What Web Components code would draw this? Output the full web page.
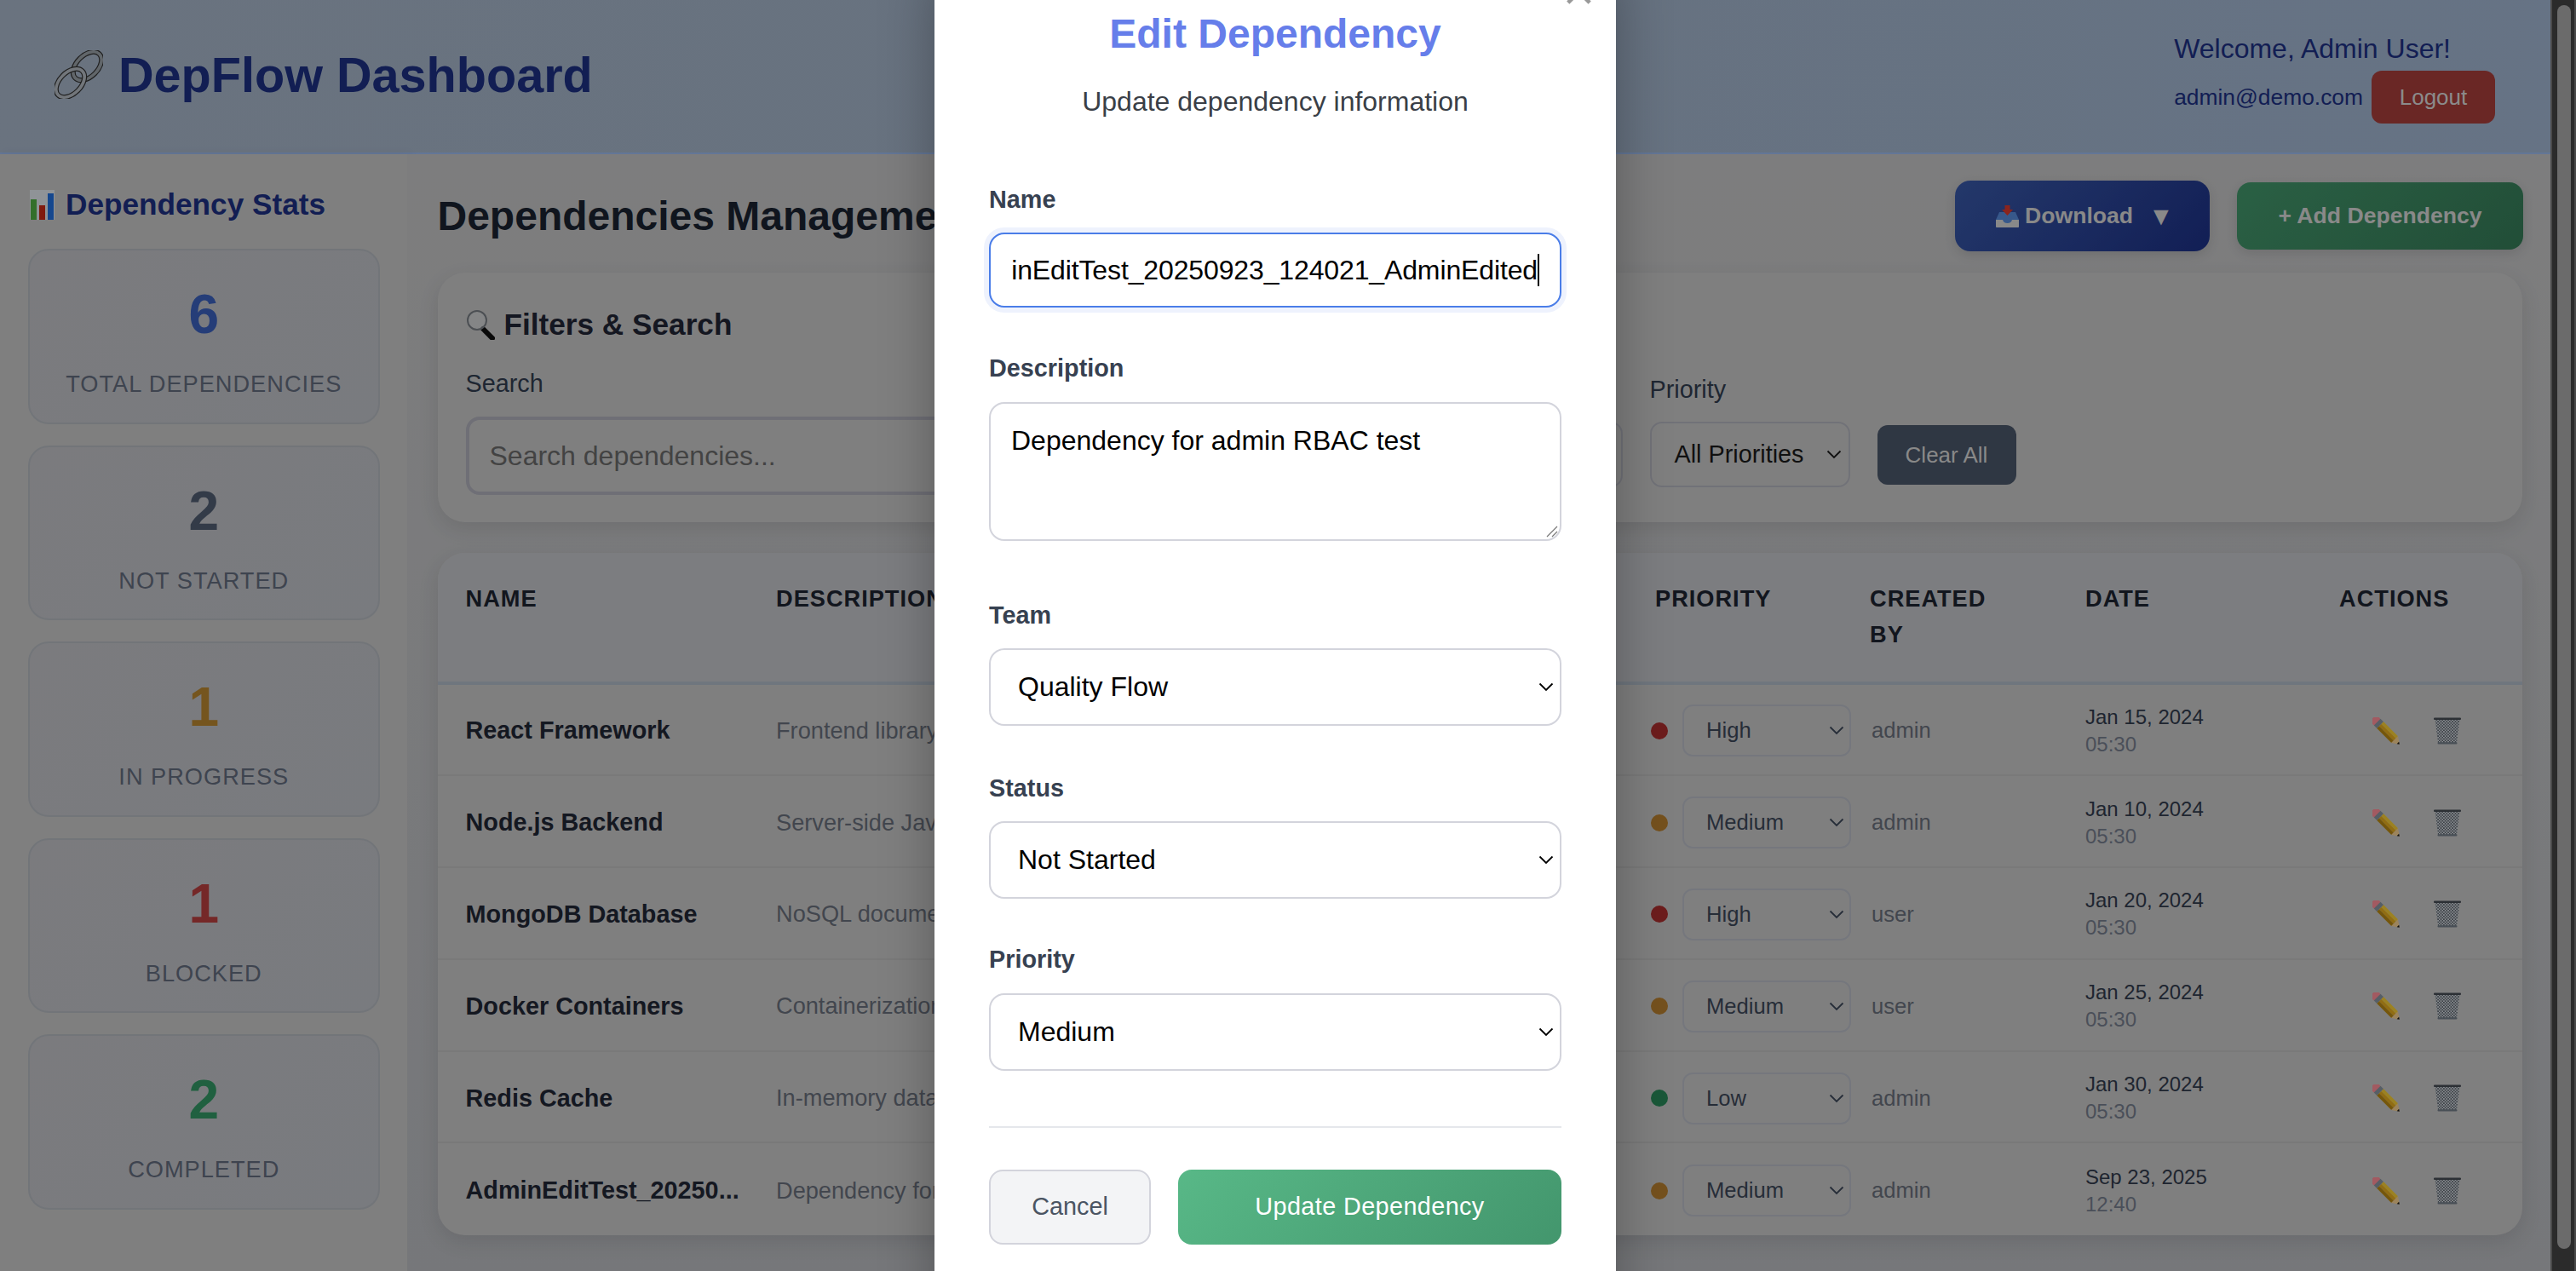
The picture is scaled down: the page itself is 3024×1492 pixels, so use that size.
<!DOCTYPE html>
<html lang="en">
<head>
<meta charset="utf-8">
<title>DepFlow Dashboard</title>
<style>
    html, body { margin: 0; height: 100%; overflow: hidden; }
    body { font-family: "Liberation Sans", Arial, sans-serif; }
</style>
</head>
<body>
<dep-app></dep-app>

<script>
const ICONS = {
    link: `<svg viewBox="0 0 57 57"><g fill="none">
        <ellipse cx="38.5" cy="18.5" rx="20" ry="12.5" transform="rotate(-45 38.5 18.5)" stroke="#2e2e2e" stroke-width="6"/>
        <ellipse cx="38.5" cy="18.5" rx="20" ry="12.5" transform="rotate(-45 38.5 18.5)" stroke="#8c9298" stroke-width="3.6"/>
        <ellipse cx="18.5" cy="38.5" rx="20" ry="12.5" transform="rotate(-45 18.5 38.5)" stroke="#2e2e2e" stroke-width="6"/>
        <ellipse cx="18.5" cy="38.5" rx="20" ry="12.5" transform="rotate(-45 18.5 38.5)" stroke="#a4aab0" stroke-width="3.6"/>
    </g></svg>`,
    chart: `<svg viewBox="0 0 29 35">
        <rect width="29" height="35" fill="#cdd3d8"/>
        <rect x="1" y="11" width="7" height="24" fill="#4a9f3e"/>
        <rect x="11" y="18" width="7" height="17" fill="#b82616"/>
        <rect x="21" y="4" width="7" height="31" fill="#1f66cc"/>
    </svg>`,
    search: `<svg viewBox="0 0 34 36">
        <path d="M20 23 L31 34" stroke="#0d0d0d" stroke-width="6" stroke-linecap="round"/>
        <circle cx="13" cy="13" r="11" fill="#c4c8cc" fill-opacity=".5" stroke="#6d7278" stroke-width="2"/>
    </svg>`,
    tray: `<svg viewBox="0 0 27 26">
        <path d="M4 8 H23 L27 17 V25 Q27 26 26 26 H1 Q0 26 0 25 V17 Z" fill="#4f7fc8"/>
        <path d="M0 17 H8 Q9 21 13.5 21 Q18 21 19 17 H27 V25 Q27 26 26 26 H1 Q0 26 0 25 Z" fill="#c4c4c4"/>
        <path d="M10.5 0 H16.5 V5 H20 L13.5 12 L7 5 H10.5 Z" fill="#c8342a"/>
    </svg>`,
    pencil: `<svg viewBox="0 0 32 32"><g transform="translate(3.5 3.5) rotate(45)">
        <rect x="-4" y="-5.5" width="9" height="11" rx="3.5" fill="#e8818c"/>
        <rect x="3" y="-5.5" width="5" height="11" fill="#7c8792"/>
        <rect x="8" y="-5.5" width="24" height="3.7" fill="#e0ba30"/>
        <rect x="8" y="-1.8" width="24" height="3.6" fill="#d09c1a"/>
        <rect x="8" y="1.8" width="24" height="3.7" fill="#a87c10"/>
        <path d="M32 -5.5 L40 0 L32 5.5 Z" fill="#e0bd84"/>
        <path d="M37.4 -1.8 L40 0 L37.4 1.8 Z" fill="#111"/>
    </g></svg>`,
    bin: `<svg viewBox="0 0 32 32">
        <defs><pattern id="mesh" width="3.4" height="3.4" patternUnits="userSpaceOnUse">
            <path d="M0 0 L3.4 3.4 M3.4 0 L0 3.4" stroke="#454c54" stroke-width=".75"/>
        </pattern></defs>
        <path d="M1.5 2 L5 30 H27 L30.5 2 Z" fill="#c2c8ce"/>
        <path d="M1.5 2 L5 30 H27 L30.5 2 Z" fill="url(#mesh)"/>
        <rect x="0" y="0.5" width="32" height="2.4" rx="1" fill="#3f454d"/>
        <rect x="4.5" y="29.2" width="23" height="2.2" rx="1" fill="#68717b"/>
    </svg>`,
};

class ShadowEl extends HTMLElement {
    execShadow(html) {
        const template = document.createElement('template');
        template.innerHTML = html;
        const shadowRoot = this.shadowRoot || this.attachShadow({ mode: 'open' });
        shadowRoot.innerHTML = '';
        shadowRoot.appendChild(template.content.cloneNode(true));
        this.shadow = shadowRoot;
    }
}

class EmojiIcon extends ShadowEl {
    connectedCallback() {
        const w = this.getAttribute('w');
        const h = this.getAttribute('h') || w;
        this.execShadow(`
<style>
    :host { display: inline-block; flex: none; line-height: 0; width: ${w}px; height: ${h}px; }
    svg { width: 100%; height: 100%; display: block; }
</style>
${ICONS[this.getAttribute('name')]}`);
    }
}

// drawn select: the native arrow differs per platform
class FakeSelect extends ShadowEl {
    constructor() {
        super();
        this.execShadow(`
<style>
    :host {
        display: flex;
        align-items: center;
        box-sizing: border-box;
        background: var(--select-bg, transparent);
        border: 2px solid var(--select-border, #a5a8b2);
        border-radius: var(--select-radius, 12px);
        padding-left: var(--select-pad, 27px);
        padding-right: var(--arrow-pad, 8px);
        color: var(--select-color, #181818);
        white-space: nowrap;
    }
    .text { flex: 1; }
    svg { flex: none; width: 18px; height: 11px; }
</style>
<span class="text"><slot></slot></span>
<svg viewBox="0 0 18 11"><path d="M1.5 1.5 L9 9 L16.5 1.5" fill="none" stroke="currentColor" stroke-width="1.8"/></svg>`);
    }
}

class AppHeader extends ShadowEl {
    static TEMPLATE = `
<style>
    :host {
        display: flex;
        align-items: center;
        justify-content: space-between;
        box-sizing: border-box;
        height: 181px;
        padding: 0 65px 0 64px;
        background: linear-gradient(100deg, #98a5b7 0%, #94a4b8 60%, #92a5bf 100%);
        border-bottom: 2px solid #8ea9d8;
    }
    h1 {
        display: flex;
        align-items: center;
        gap: 18px;
        margin: 0 0 4px;
        font-size: 57.6px;
        line-height: 68px;
        font-weight: 700;
        color: #1a2c78;
    }
    .user { margin-top: 5px; color: #1a2c78; }
    .welcome { font-size: 32px; line-height: 36px; margin-bottom: 8px; }
    .line { display: flex; align-items: center; gap: 10px; font-size: 26.4px; }
    button {
        width: 145px;
        height: 62px;
        border: 0;
        border-radius: 12px;
        background: #983835;
        color: #c8c8c8;
        font: inherit;
        font-size: 26px;
    }
</style>
<h1><emoji-icon name="link" w="57"></emoji-icon>DepFlow Dashboard</h1>
<div class="user">
    <div class="welcome">Welcome, Admin User!</div>
    <div class="line"><span>admin@demo.com</span><button>Logout</button></div>
</div>`;
    constructor() {
        super();
        this.execShadow(AppHeader.TEMPLATE);
    }
}

class StatCard extends ShadowEl {
    connectedCallback() {
        this.execShadow(`
<style>
    :host {
        display: block;
        box-sizing: border-box;
        height: 205.5px;
        padding-top: 39px;
        text-align: center;
        background: linear-gradient(135deg, #b0b1b5, #aeb0b6);
        border: 2px solid #a4a8ae;
        border-radius: 24px;
    }
    .num { font-size: 64px; line-height: 72px; font-weight: 700; color: ${this.getAttribute('color')}; }
    .label { margin-top: 29px; font-size: 27.2px; line-height: 34px; letter-spacing: 1px; color: #5a6272; }
</style>
<div class="num">${this.getAttribute('value')}</div>
<div class="label">${this.getAttribute('label')}</div>`);
    }
}

class StatSidebar extends ShadowEl {
    static TEMPLATE = `
<style>
    :host {
        display: flex;
        flex-direction: column;
        gap: 25px;
        flex: none;
        box-sizing: border-box;
        width: 478px;
        padding: 39px 32.5px 0 33px;
        background: #b7b7b7;
        box-shadow: 4px 0 12px rgba(0, 0, 0, .05);
    }
    h2 {
        display: flex;
        align-items: center;
        gap: 13px;
        margin: 0 0 7px;
        font-size: 35.2px;
        line-height: 40px;
        color: #1a2c78;
        padding-left: 2px;
    }
</style>
<h2><emoji-icon name="chart" w="29" h="35"></emoji-icon>Dependency Stats</h2>
<stat-card value="6" label="TOTAL DEPENDENCIES" color="#3558ac"></stat-card>
<stat-card value="2" label="NOT STARTED" color="#4a5568"></stat-card>
<stat-card value="1" label="IN PROGRESS" color="#a87a2c"></stat-card>
<stat-card value="1" label="BLOCKED" color="#a83a3a"></stat-card>
<stat-card value="2" label="COMPLETED" color="#2f8a5c"></stat-card>`;
    constructor() {
        super();
        this.execShadow(StatSidebar.TEMPLATE);
    }
}

class FilterPanel extends ShadowEl {
    static TEMPLATE = `
<style>
    :host {
        display: block;
        box-sizing: border-box;
        height: 293px;
        padding: 40px 33px 32px;
        background: #b7b7b7;
        border-radius: 32px;
        box-shadow: 0 8px 24px rgba(0, 0, 0, .1);
    }
    h3 {
        display: flex;
        align-items: center;
        gap: 11px;
        margin: 0 0 29px;
        font-size: 35.2px;
        line-height: 42px;
        color: #1d2230;
    }
    .row { display: flex; align-items: center; gap: 32px; height: 150px; }
    label { display: block; font-size: 28.8px; line-height: 34px; color: #2d3748; }
    .search { width: 1112px; }
    .search label { margin: 2px 0 22px; }
    .box {
        box-sizing: border-box;
        height: 92px;
        padding-left: 24px;
        display: flex;
        align-items: center;
        font-size: 32px;
        color: #606060;
        border: 4px solid #9fa0aa;
        border-radius: 16px;
    }
    .pick label { margin-bottom: 21px; }
    fake-select { height: 77px; font-size: 28.8px; --select-border: #a3a4ad; --select-radius: 14px; }
    .status { width: 214px; }
    .priority { width: 235px; }
    button {
        width: 163px;
        height: 70px;
        margin-top: 56px;
        border: 0;
        border-radius: 12px;
        background: #444f60;
        color: #c4c4c4;
        font: inherit;
        font-size: 26px;
    }
</style>
<h3><emoji-icon name="search" w="34" h="36"></emoji-icon>Filters &amp; Search</h3>
<div class="row">
    <div class="search">
        <label>Search</label>
        <div class="box">Search dependencies...</div>
    </div>
    <div class="pick status"><label>&nbsp;</label><fake-select></fake-select></div>
    <div class="pick priority"><label>Priority</label><fake-select>All Priorities</fake-select></div>
    <button>Clear All</button>
</div>`;
    constructor() {
        super();
        this.execShadow(FilterPanel.TEMPLATE);
    }
}

class DepRow extends ShadowEl {
    connectedCallback() {
        const get = k => this.getAttribute(k);
        this.execShadow(`
<style>
    :host {
        display: grid;
        grid-template-columns: var(--cols);
        align-items: center;
        box-sizing: border-box;
        height: 107.8px;
        padding: 3px 0 0 33px;
        border-bottom: 2px solid #aeaeae;
    }
    :host(:last-child) { border-bottom: 0; }
    .name { font-size: 28.8px; font-weight: 700; color: #1d2330; white-space: nowrap; }
    .desc { font-size: 27.2px; color: #5f6570; white-space: nowrap; }
    .prio { display: flex; align-items: center; gap: 17px; }
    .dot { width: 20px; height: 20px; border-radius: 50%; background: ${get('dot')}; }
    fake-select {
        width: 198px;
        height: 61px;
        font-size: 25.6px;
        --select-color: #374151;
        --select-pad: 26px;
        --arrow-pad: 6px;
        --select-border: #a8abb4;
    }
    .by { font-size: 25.6px; color: #5f6570; padding-left: 2px; }
    .date { font-size: 24px; line-height: 32px; color: #2d3545; }
    .time { color: #6b7280; }
    .actions { display: flex; align-items: center; gap: 40px; padding-left: 39px; }
</style>
<div class="name">${get('name')}</div>
<div class="desc">${get('desc')}</div>
<div class="prio"><span class="dot"></span><fake-select>${get('prio')}</fake-select></div>
<div class="by">${get('by')}</div>
<div class="date"><div>${get('date')}</div><div class="time">${get('time')}</div></div>
<div class="actions"><emoji-icon name="pencil" w="32"></emoji-icon><emoji-icon name="bin" w="32"></emoji-icon></div>`);
    }
}

class DepTable extends ShadowEl {
    static TEMPLATE = `
<style>
    :host {
        display: block;
        --cols: 364.5px 1027px 257px 253px 298px 1fr;
        background: #b7b7b7;
        border-radius: 32px;
        overflow: hidden;
        box-shadow: 0 8px 24px rgba(0, 0, 0, .1);
    }
    .head {
        display: grid;
        grid-template-columns: var(--cols);
        box-sizing: border-box;
        height: 155px;
        padding: 33.5px 0 0 33px;
        background: #b2b4b8;
        border-bottom: 4px solid #a0a9b5;
        font-size: 27.2px;
        line-height: 42px;
        font-weight: 700;
        letter-spacing: 1px;
        color: #1a202c;
    }
    .pad { padding-left: 5px; }
    .wrap { width: 150px; }
</style>
<div class="head">
    <div>NAME</div>
    <div>DESCRIPTION</div>
    <div class="pad">PRIORITY</div>
    <div class="wrap">CREATED BY</div>
    <div>DATE</div>
    <div>ACTIONS</div>
</div>
<div id="rows"></div>`;
    constructor() {
        super();
        this.execShadow(DepTable.TEMPLATE);

        const high = '#9c2a2a';
        const medium = '#a8752c';
        const low = '#267f52';
        const list = [
            ['React Framework', 'Frontend library for user interfaces', high, 'High', 'admin', 'Jan 15, 2024', '05:30'],
            ['Node.js Backend', 'Server-side JavaScript runtime', medium, 'Medium', 'admin', 'Jan 10, 2024', '05:30'],
            ['MongoDB Database', 'NoSQL document database', high, 'High', 'user', 'Jan 20, 2024', '05:30'],
            ['Docker Containers', 'Containerization platform', medium, 'Medium', 'user', 'Jan 25, 2024', '05:30'],
            ['Redis Cache', 'In-memory data store', low, 'Low', 'admin', 'Jan 30, 2024', '05:30'],
            ['AdminEditTest_20250...', 'Dependency for admin RBAC test', medium, 'Medium', 'admin', 'Sep 23, 2025', '12:40'],
        ];

        const parent = this.shadow.getElementById('rows');
        list.forEach(item => {
            const row = document.createElement('dep-row');
            ['name', 'desc', 'dot', 'prio', 'by', 'date', 'time'].forEach((k, i) => row.setAttribute(k, item[i]));
            parent.appendChild(row);
        });
    }
}

class MainArea extends ShadowEl {
    static TEMPLATE = `
<style>
    :host {
        display: block;
        flex: 1;
        min-width: 0;
        box-sizing: border-box;
        padding: 31px 33px 0 35.5px;
        background: linear-gradient(180deg, #b4b4b5, #a9abaf);
    }
    .top {
        display: flex;
        align-items: center;
        height: 83px;
        margin: 0 -1px 25px 0;
    }
    h2 { margin: 0; flex: 1; font-size: 48px; line-height: 56px; color: #181f2c; }
    .top button {
        border: 0;
        font: inherit;
        font-size: 26.6px;
        font-weight: 700;
        color: #c4c4c4;
        box-shadow: 0 4px 14px rgba(0, 0, 0, .12);
    }
    .download {
        display: flex;
        align-items: center;
        width: 299px;
        height: 83px;
        padding: 0 0 0 48px;
        margin-right: 32px;
        border-radius: 18px;
        background: linear-gradient(135deg, #345199, #1a2c7a);
    }
    .download emoji-icon { margin-right: 7px; }
    .download i { font-style: normal; font-size: 30px; margin-left: 18px; }
    .add {
        width: 336px;
        height: 79px;
        border-radius: 16px;
        background: linear-gradient(135deg, #3d8a62, #317050);
    }
    filter-panel { margin-bottom: 35.5px; }
</style>
<div class="top">
    <h2>Dependencies Management</h2>
    <button class="download"><emoji-icon name="tray" w="27" h="26"></emoji-icon>Download<i>▼</i></button>
    <button class="add">+ Add Dependency</button>
</div>
<filter-panel></filter-panel>
<dep-table></dep-table>`;
    constructor() {
        super();
        this.execShadow(MainArea.TEMPLATE);
    }
}

class FormField extends ShadowEl {
    connectedCallback() {
        this.execShadow(`
<style>
    :host { display: block; margin-bottom: 54px; }
    label {
        display: block;
        margin-bottom: 22.5px;
        font-size: 28.8px;
        line-height: 34px;
        font-weight: 700;
        color: #374151;
    }
</style>
<label>${this.getAttribute('label')}</label>
<slot></slot>`);
    }
}

class EditModal extends ShadowEl {
    static TEMPLATE = `
<style>
    :host {
        display: block;
        position: relative;
        flex: none;
        box-sizing: border-box;
        width: 800px;
        height: 1620px;
        margin-top: -52px;
        padding: 64px 64px 0;
        background: #fff;
        box-shadow: 0 20px 60px rgba(0, 0, 0, .3);
        --select-border: #d3d4dc;
        --select-radius: 18px;
        --select-color: #000;
        --select-pad: 32px;
        --arrow-pad: 7px;
    }
    .close {
        position: absolute;
        top: 14px;
        right: 25px;
        font-size: 64px;
        line-height: 56px;
        color: #999;
    }
    h2 {
        margin: 0 0 31px;
        font-size: 48px;
        line-height: 56px;
        text-align: center;
        color: #667eea;
    }
    .sub {
        margin-bottom: 77.5px;
        font-size: 32px;
        line-height: 40px;
        text-align: center;
        color: #3a3f47;
    }
    .input {
        display: flex;
        justify-content: flex-end;
        box-sizing: border-box;
        height: 88px;
        padding: 0 24px 0 23px;
        align-items: center;
        font-size: 32px;
        background: #fff;
        border: 2px solid #4a7de8;
        border-radius: 18px;
        box-shadow: 0 0 0 6px #eef2fd;
    }
    .clip { overflow: hidden; display: flex; justify-content: flex-end; white-space: nowrap; letter-spacing: -.13px; }
    .clip span { flex: none; border-right: 2px solid #000; line-height: 38px; }
    .area {
        position: relative;
        box-sizing: border-box;
        height: 163px;
        padding: 23px 24px;
        font-size: 32px;
        line-height: 40px;
        border: 2px solid #d3d4dc;
        border-radius: 18px;
    }
    .area svg { position: absolute; right: 2px; bottom: 2px; width: 14px; height: 14px; }
    fake-select { height: 91px; font-size: 32px; }
    .desc { margin-bottom: 70px; }
    .team { margin-bottom: 55.5px; }
    .foot {
        display: flex;
        gap: 32px;
        margin-top: 65px;
        padding-top: 49px;
        border-top: 2px solid #e5e7eb;
    }
    .foot button {
        height: 88px;
        border-radius: 16px;
        font: inherit;
        font-size: 28.8px;
    }
    .cancel { width: 190px; background: #f3f4f6; border: 2px solid #d3d4dc; color: #4b5563; }
    .save {
        flex: 1;
        border: 0;
        color: #fff;
        letter-spacing: .4px;
        background: linear-gradient(135deg, #58b887, #43966d);
    }
</style>
<span class="close">×</span>
<h2>Edit Dependency</h2>
<div class="sub">Update dependency information</div>
<form-field label="Name">
    <div class="input"><div class="clip"><span>AdminEditTest_20250923_124021_AdminEdited</span></div></div>
</form-field>
<form-field class="desc" label="Description">
    <div class="area">Dependency for admin RBAC test
        <svg viewBox="0 0 14 14"><path d="M1 13 L13 1 M7 13 L13 7" stroke="#777" stroke-width="1.2"/></svg>
    </div>
</form-field>
<form-field class="team" label="Team"><fake-select>Quality Flow</fake-select></form-field>
<form-field label="Status"><fake-select>Not Started</fake-select></form-field>
<form-field style="margin-bottom:0" label="Priority"><fake-select>Medium</fake-select></form-field>
<div class="foot">
    <button class="cancel">Cancel</button>
    <button class="save">Update Dependency</button>
</div>`;
    constructor() {
        super();
        this.execShadow(EditModal.TEMPLATE);
    }
}

class DepApp extends ShadowEl {
    static TEMPLATE = `
<style>
    :host { display: flex; height: 100vh; overflow: hidden; }
    .page { position: relative; flex: 1; min-width: 0; display: flex; flex-direction: column; }
    .body { flex: 1; display: flex; min-height: 0; }
    .overlay {
        position: absolute;
        inset: 0;
        display: flex;
        justify-content: center;
        overflow: hidden;
        background: rgba(0, 0, 0, .3);
    }
    .scroll {
        flex: none;
        width: 30px;
        box-sizing: border-box;
        padding: 6px 4px 26px 6px;
        background: #2b2b2b;
        border-left: 2px solid #4a4a4a;
        border-right: 2px solid #4a4a4a;
    }
    .scroll div { height: 100%; border-radius: 8px; background: #6b6b6b; }
</style>
<div class="page">
    <app-header></app-header>
    <div class="body">
        <stat-sidebar></stat-sidebar>
        <main-area></main-area>
    </div>
    <div class="overlay"><edit-modal></edit-modal></div>
</div>
<div class="scroll"><div></div></div>`;
    constructor() {
        super();
        this.execShadow(DepApp.TEMPLATE);
    }
}

customElements.define('emoji-icon', EmojiIcon);
customElements.define('fake-select', FakeSelect);
customElements.define('app-header', AppHeader);
customElements.define('stat-card', StatCard);
customElements.define('stat-sidebar', StatSidebar);
customElements.define('filter-panel', FilterPanel);
customElements.define('dep-row', DepRow);
customElements.define('dep-table', DepTable);
customElements.define('main-area', MainArea);
customElements.define('form-field', FormField);
customElements.define('edit-modal', EditModal);
customElements.define('dep-app', DepApp);
</script>
</body>
</html>
